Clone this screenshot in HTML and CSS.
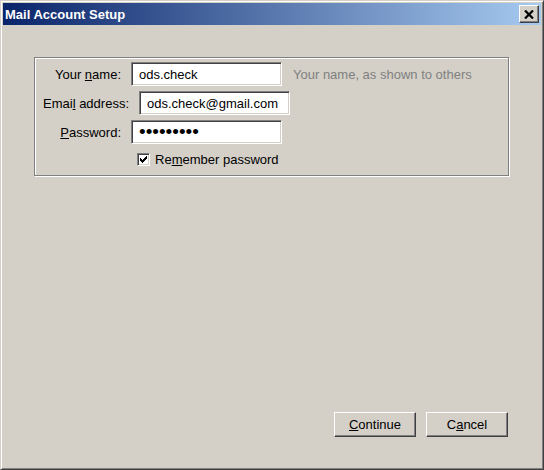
FILE: index.html
```html
<!DOCTYPE html>
<html lang="en">
<head>
    <meta charset="UTF-8">
    <title>Mail Account Setup</title>
    <link rel="stylesheet" href="styles.css">
</head>
<body>
    <div class="window">
        <div class="titlebar">
            <span class="title">Mail Account Setup</span>
            <button class="close-btn" title="Close">
                <svg width="10" height="9" viewBox="0 0 10 9">
                    <path d="M1 0.5L9 8.5M9 0.5L1 8.5" stroke="#000" stroke-width="2.2" fill="none"/>
                </svg>
            </button>
        </div>

        <div class="content">
            <div class="groupbox">
                <div class="row">
                    <label class="label" for="realname">Your <u>n</u>ame:</label>
                    <input class="field" type="text" id="realname" value="ods.check">
                    <span class="hint">Your name, as shown to others</span>
                </div>
                <div class="row">
                    <label class="label" for="email">Emai<u>l</u> address:</label>
                    <input class="field" type="text" id="email" value="ods.check@gmail.com">
                </div>
                <div class="row">
                    <label class="label" for="password"><u>P</u>assword:</label>
                    <input class="field password" type="password" id="password" value="secret123">
                </div>
                <div class="check-row">
                    <span class="checkbox">
                        <svg width="7" height="7" viewBox="0 0 7 7">
                            <path d="M0 2h1v3h-1zM1 3h1v3h-1zM2 4h1v3h-1zM3 3h1v3h-1zM4 2h1v3h-1zM5 1h1v3h-1zM6 0h1v3h-1z" fill="#000"/>
                        </svg>
                    </span>
                    <span class="check-label">Re<u>m</u>ember password</span>
                </div>
            </div>

            <div class="buttons">
                <button class="btn"><u>C</u>ontinue</button>
                <button class="btn">C<u>a</u>ncel</button>
            </div>
        </div>
    </div>
</body>
</html>
```

FILE: styles.css
```css
body {
    margin: 0;
    font-family: "Liberation Sans", Arial, sans-serif;
    font-size: 13px;
    color: #000;
    background-color: #d4d0c8;
}

.window {
    box-sizing: border-box;
    width: 544px;
    height: 470px;
    padding: 2px;
    display: flex;
    flex-direction: column;
    background-color: #d4d0c8;
    border-top: 1px solid #d4d0c8;
    border-left: 1px solid #d4d0c8;
    border-right: 1px solid #404040;
    border-bottom: 1px solid #404040;
    box-shadow: inset 1px 1px #fff, inset -1px -1px #808080;
}

.titlebar {
    height: 22px;
    display: flex;
    align-items: center;
    justify-content: space-between;
    padding: 0 2px;
    background: linear-gradient(to right, #0a246a, #a6caf0);
}

.title {
    color: #fff;
    font-weight: bold;
    font-size: 13px;
}

.close-btn {
    box-sizing: border-box;
    width: 20px;
    height: 18px;
    padding: 0;
    display: flex;
    align-items: center;
    justify-content: center;
    background-color: #d4d0c8;
    border: 1px solid;
    border-color: #fff #404040 #404040 #fff;
    box-shadow: inset -1px -1px #808080;
}

.content {
    flex: 1;
    display: flex;
    flex-direction: column;
    padding: 32px 32px 30px 31px;
}

.groupbox {
    height: 119px;
    box-sizing: border-box;
    border: 1px solid #808080;
    box-shadow: inset 1px 1px #fff, 1px 1px 0 #fff;
    padding: 4px 8px 0 8px;
    display: flex;
    flex-direction: column;
    gap: 5px;
}

.row {
    display: flex;
    align-items: center;
    height: 24px;
}

.label {
    min-width: 78px;
    text-align: right;
    margin-right: 10px;
    white-space: nowrap;
}

.field {
    box-sizing: border-box;
    width: 151px;
    height: 24px;
    padding: 0 0 0 7px;
    font-family: "Liberation Sans", Arial, sans-serif;
    font-size: 13px;
    color: #000;
    background-color: #fff;
    outline: none;
    border: 1px solid;
    border-color: #808080 #fff #fff #808080;
    box-shadow: inset 1px 1px #404040, inset -1px -1px #d4d0c8;
}

.password {
    font-size: 19px;
    letter-spacing: 0;
}

.hint {
    margin-left: 11px;
    color: #808080;
    white-space: nowrap;
}

.check-row {
    display: flex;
    align-items: center;
    margin-top: 3px;
    padding-left: 94px;
}

.checkbox {
    box-sizing: border-box;
    width: 13px;
    height: 13px;
    display: flex;
    align-items: center;
    justify-content: center;
    background-color: #fff;
    border: 1px solid;
    border-color: #808080 #fff #fff #808080;
    box-shadow: inset 1px 1px #404040, inset -1px -1px #d4d0c8;
}

.check-label {
    margin-left: 5px;
}

.buttons {
    margin-top: auto;
    padding-right: 1px;
    display: flex;
    justify-content: flex-end;
    gap: 10px;
}

.btn {
    box-sizing: border-box;
    width: 82px;
    height: 25px;
    padding: 0;
    font-family: "Liberation Sans", Arial, sans-serif;
    font-size: 13px;
    color: #000;
    background-color: #d4d0c8;
    border: 1px solid;
    border-color: #fff #404040 #404040 #fff;
    box-shadow: inset -1px -1px #808080;
    cursor: pointer;
}
```
